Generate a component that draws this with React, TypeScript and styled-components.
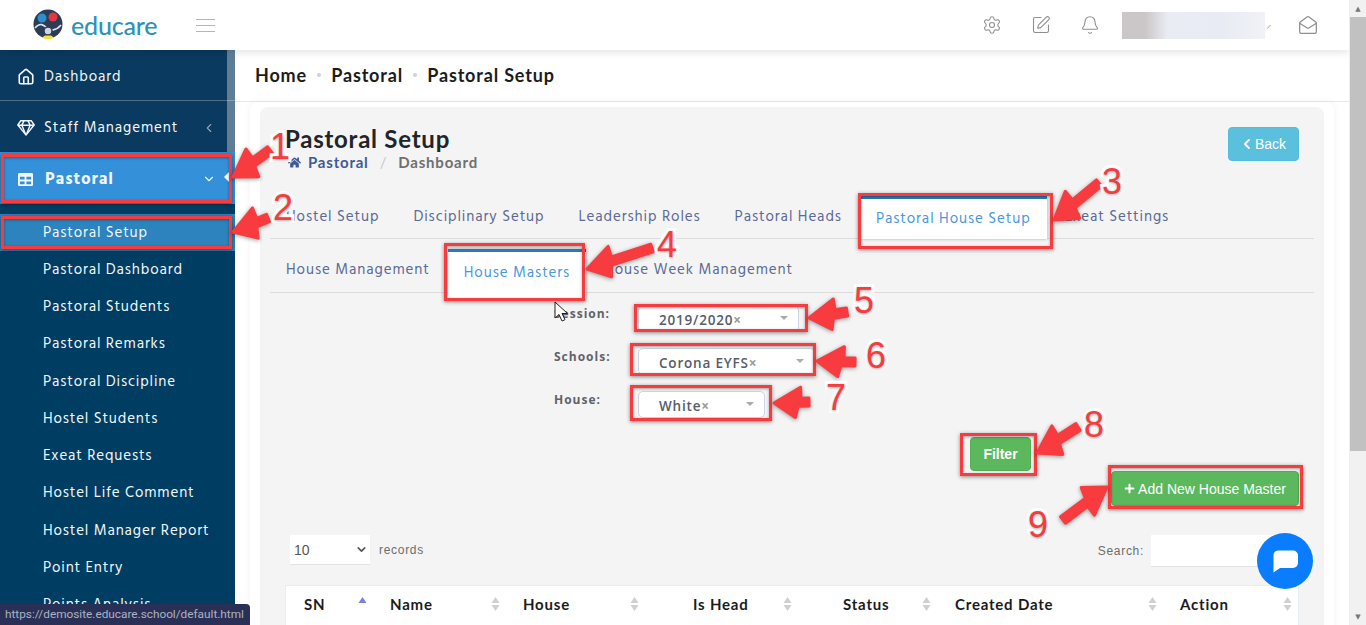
import React from 'react';
import styled, { createGlobalStyle } from 'styled-components';
import { Bell, ChevronDown, ChevronLeft, Home, MailOpen, Settings, SquarePen } from 'lucide-react';
import { FaChevronLeft, FaHome, FaPlus, FaRegGem, FaTable } from 'react-icons/fa';

const UI_FONT = `"Hind", "Noto Sans", "Liberation Sans", sans-serif`;
const TITLE_FONT = `"Lato", "Noto Sans", sans-serif`;
const RED = '#f73b3f';

const SUB_ITEMS = [
  'Pastoral Setup', 'Pastoral Dashboard', 'Pastoral Students', 'Pastoral Remarks', 'Pastoral Discipline',
  'Hostel Students', 'Exeat Requests', 'Hostel Life Comment', 'Hostel Manager Report', 'Point Entry', 'Points Analysis',
];

const MAIN_TABS = ['Hostel Setup', 'Disciplinary Setup', 'Leadership Roles', 'Pastoral Heads', 'Pastoral House Setup', 'Exeat Settings'];
const SUB_TABS = ['House Management', 'House Masters', 'House Week Management'];

const COLUMNS = [
  { label: 'SN', width: 86, sortPad: 5, active: true },
  { label: 'Name', width: 133, sortPad: 5 },
  { label: 'House', width: 170, sortPad: 36 },
  { label: 'Is Head', width: 150, sortPad: 33 },
  { label: 'Status', width: 112, sortPad: 6 },
  { label: 'Created Date', width: 225, sortPad: 5 },
  { label: 'Action', width: 135, sortPad: 5 },
];

const BOXES = [
  { x: 1, y: 154, w: 231, h: 49 },
  { x: 1, y: 216, w: 231, h: 33 },
  { x: 858, y: 193, w: 195, h: 56 },
  { x: 444, y: 243, w: 141, h: 58 },
  { x: 634, y: 304, w: 174, h: 28 },
  { x: 630, y: 343, w: 186, h: 33 },
  { x: 630, y: 385, w: 142, h: 36 },
  { x: 960, y: 433, w: 77, h: 43 },
  { x: 1108, y: 465, w: 195, h: 44 },
];

const ARROWS = [
  { from: [270, 150], to: [233, 177] },
  { from: [268, 218], to: [233, 232] },
  { from: [1099, 183], to: [1054, 220] },
  { from: [652, 248], to: [587, 269] },
  { from: [847, 312], to: [809, 318] },
  { from: [855, 362], to: [817, 361] },
  { from: [809, 402], to: [774, 403] },
  { from: [1078, 427], to: [1037, 453] },
  { from: [1063, 520], to: [1107, 487] },
];

const NUMBERS = [
  { n: 1, x: 280, y: 147 },
  { n: 2, x: 283, y: 208 },
  { n: 3, x: 1112, y: 182 },
  { n: 4, x: 667, y: 245 },
  { n: 5, x: 864, y: 301 },
  { n: 6, x: 876, y: 356 },
  { n: 7, x: 836, y: 398 },
  { n: 8, x: 1094, y: 425 },
  { n: 9, x: 1038, y: 525 },
];

const arrowPoints = (from: number[], to: number[]) => {
  const dx = to[0] - from[0];
  const dy = to[1] - from[1];
  const len = Math.hypot(dx, dy);
  const ux = dx / len;
  const uy = dy / len;
  const nx = -uy;
  const ny = ux;
  const headLen = 24;
  const baseX = to[0] - ux * headLen;
  const baseY = to[1] - uy * headLen;
  const pt = (x: number, y: number) => `${x.toFixed(1)},${y.toFixed(1)}`;
  return [
    pt(from[0] + nx * 4, from[1] + ny * 4),
    pt(baseX + nx * 4 - ux * 3, baseY + ny * 4 - uy * 3),
    pt(baseX + nx * 15 - ux * 3, baseY + ny * 15 - uy * 3),
    pt(to[0], to[1]),
    pt(baseX - nx * 15 + ux * 3, baseY - ny * 15 + uy * 3),
    pt(baseX - nx * 4, baseY - ny * 4),
    pt(from[0] - nx * 4, from[1] - ny * 4),
  ].join(' ');
};

const SortIcon = ({ active }: { active?: boolean }) => (
  <SortSvg viewBox="0 0 10 18" $active={active}>
    <polygon className="up" points="5,1 9.5,8 0.5,8" />
    {!active && <polygon className="down" points="0.5,10 9.5,10 5,17" />}
  </SortSvg>
);

const App = () => (
  <>
    <GlobalStyle />
    <Page>
      <Content>
        <TopBar>
          <LogoArea>
            <svg width="32" height="32" viewBox="0 0 32 32">
              <circle cx="16" cy="15" r="14.5" fill="#2d3c55" />
              <circle cx="10" cy="9" r="4.5" fill="#2c8fd0" />
              <circle cx="21" cy="8" r="4.5" fill="#e2383f" />
              <path d="M3 19c5-6 9-3 12 0s9 3 14-3" stroke="#dfe6ee" strokeWidth="1.6" fill="none" />
              <circle cx="16" cy="22" r="4" fill="#cfd6de" stroke="#2d3c55" strokeWidth="1.5" />
              <path d="M10 28.5c4 2 9 2 12 0l-3-2h-6z" fill="#f3e23c" />
            </svg>
            <LogoText>educare</LogoText>
          </LogoArea>
          <Burger>
            <span />
            <span />
            <span />
          </Burger>
          <TopIcons>
            <Settings size={20} strokeWidth={1.3} />
            <SquarePen size={20} strokeWidth={1.3} />
            <Bell size={20} strokeWidth={1.3} />
            <UserBlur />
            <UserCaret />
            <MailOpen size={20} strokeWidth={1.5} />
          </TopIcons>
        </TopBar>

        <Body>
          <Sidebar>
            <SideThumb />
            <SideItem $divider>
              <Home size={18} strokeWidth={2.2} />
              <span>Dashboard</span>
            </SideItem>
            <SideItem>
              <FaRegGem size={18} />
              <span>Staff Management</span>
              <ChevronLeft size={14} color="#8ba3b8" />
            </SideItem>
            <SideActive>
              <FaTable size={15} />
              <span>Pastoral</span>
              <ChevronDown size={14} />
            </SideActive>
            <SubMenu>
              {SUB_ITEMS.map((item, i) => (
                <SubItem key={item} $active={i === 0}>{item}</SubItem>
              ))}
            </SubMenu>
          </Sidebar>

          <Main>
            <Crumbs>
              <span>Home</span>
              <Dot />
              <span>Pastoral</span>
              <Dot />
              <span>Pastoral Setup</span>
            </Crumbs>

            <OuterCard>
              <Card>
                <TitleRow>
                  <div>
                    <PageTitle>Pastoral Setup</PageTitle>
                    <Path>
                      <FaHome size={13} color="#3f5a96" />
                      <PathLink>Pastoral</PathLink>
                      <PathSep>/</PathSep>
                      <PathCurrent>Dashboard</PathCurrent>
                    </Path>
                  </div>
                  <BackButton>
                    <FaChevronLeft size={12} />
                    Back
                  </BackButton>
                </TitleRow>

                <TabRow>
                  {MAIN_TABS.map((tab) => (
                    <Tab key={tab} $active={tab === 'Pastoral House Setup'}>{tab}</Tab>
                  ))}
                </TabRow>
                <SubTabRow>
                  {SUB_TABS.map((tab) => (
                    <SubTab key={tab} $active={tab === 'House Masters'}>{tab}</SubTab>
                  ))}
                </SubTabRow>

                <FilterForm>
                  <FormRow>
                    <FormLabel>Session:</FormLabel>
                    <SelectBox $width={161}>
                      <span>2019/2020</span><Clear>×</Clear>
                      <Caret />
                    </SelectBox>
                  </FormRow>
                  <FormRow>
                    <FormLabel>Schools:</FormLabel>
                    <SelectBox $width={177}>
                      <span>Corona EYFS</span><Clear>×</Clear>
                      <Caret />
                    </SelectBox>
                  </FormRow>
                  <FormRow>
                    <FormLabel>House:</FormLabel>
                    <SelectBox $width={127}>
                      <span>White</span><Clear>×</Clear>
                      <Caret />
                    </SelectBox>
                  </FormRow>
                </FilterForm>

                <FilterRow>
                  <FilterButton>Filter</FilterButton>
                </FilterRow>
                <AddRow>
                  <AddButton>
                    <FaPlus size={11} />
                    Add New House Master
                  </AddButton>
                </AddRow>

                <ToolRow>
                  <Records>
                    <RecordsSelect>
                      10
                      <ChevronDown size={13} strokeWidth={3} color="#555" />
                    </RecordsSelect>
                    <span>records</span>
                  </Records>
                  <SearchWrap>
                    <span>Search:</span>
                    <SearchInput />
                  </SearchWrap>
                </ToolRow>

                <TableHead>
                  {COLUMNS.map((col) => (
                    <HeadCell key={col.label} $width={col.width} $sortPad={col.sortPad}>
                      <span>{col.label}</span>
                      <SortIcon active={col.active} />
                    </HeadCell>
                  ))}
                </TableHead>
              </Card>
            </OuterCard>
          </Main>
        </Body>
      </Content>

      <Scrollbar>
        <ScrollButton>▲</ScrollButton>
        <ScrollThumb />
        <ScrollButton>▼</ScrollButton>
      </Scrollbar>

      <StatusTip>https://demosite.educare.school/default.html</StatusTip>

      <ChatBubble>
        <svg width="27" height="27" viewBox="0 0 27 27">
          <path d="M6 2.500h15a5 5 0 0 1 5 5v7.500a5 5 0 0 1-5 5H8l-6.500 4.500V7.500a5 5 0 0 1 4.500-5z" fill="#fff" />
        </svg>
      </ChatBubble>

      <Cursor width="16" height="22" viewBox="0 0 16 22">
        <path d="M1 1v16l4-3.500 3 6.500 3-1.300-3-6.200h5.500z" fill="#fff" stroke="#222" strokeWidth="1" />
      </Cursor>

      {BOXES.map((b) => (
        <RedBox key={`${b.x}-${b.y}`} $x={b.x} $y={b.y} $w={b.w} $h={b.h} />
      ))}
      <ArrowLayer width="1366" height="625" viewBox="0 0 1366 625">
        {ARROWS.map((a) => (
          <polygon key={a.to.join()} points={arrowPoints(a.from, a.to)} fill={RED} stroke={RED} strokeWidth="3" strokeLinejoin="round" />
        ))}
      </ArrowLayer>
      {NUMBERS.map((item) => (
        <StepNumber key={item.n} $x={item.x} $y={item.y}>{item.n}</StepNumber>
      ))}
    </Page>
  </>
);

const GlobalStyle = createGlobalStyle`
  html, body {
    margin: 0;
    padding: 0;
    overflow: hidden;
  }

  * {
    box-sizing: border-box;
  }
`;

const Page = styled.div`
  background: #fff;
  display: flex;
  font-family: ${UI_FONT};
  height: 625px;
  overflow: hidden;
  position: relative;
  width: 1366px;
`;

const Content = styled.div`
  display: flex;
  flex: 1;
  flex-direction: column;
  min-width: 0;
`;

const TopBar = styled.header`
  align-items: center;
  background: #fff;
  box-shadow: 0 2px 8px rgba(0, 0, 0, 0.12);
  display: flex;
  flex: 0 0 50px;
  padding: 0 31px 0 32px;
  position: relative;
  z-index: 2;
`;

const LogoArea = styled.div`
  align-items: center;
  display: flex;
  gap: 7px;
  width: 164px;
`;

const LogoText = styled.span`
  color: #2c93b8;
  font-family: ${TITLE_FONT};
  font-size: 25px;
  font-weight: 500;
  letter-spacing: -0.2px;
`;

const Burger = styled.div`
  display: flex;
  flex-direction: column;
  gap: 5px;
  width: 19px;

  span {
    background: #b5b5b5;
    display: block;
    height: 1px;
  }
`;

const TopIcons = styled.div`
  align-items: center;
  color: #8f8f8f;
  display: flex;
  gap: 29px;
  margin-left: auto;
`;

const UserBlur = styled.div`
  background: linear-gradient(90deg, #cbc6c8 0%, #cbc6c8 16%, #e9ecf3 32%, #e8ebf3 70%, #f1f2f7 100%);
  height: 27px;
  margin-left: -6.5px;
  width: 143px;
`;

const UserCaret = styled.div`
  border-bottom: 1px solid #bbb;
  height: 5px;
  margin-left: -29px;
  margin-right: -1px;
  transform: rotate(-45deg);
  width: 5px;
`;

const Body = styled.div`
  display: flex;
  flex: 1;
  min-height: 0;
`;

const Sidebar = styled.nav`
  background: #003d63;
  color: #f2f6f9;
  flex: 0 0 235px;
  overflow: hidden;
  position: relative;
`;

const SideThumb = styled.div`
  background: rgba(255, 255, 255, 0.35);
  height: 102px;
  position: absolute;
  right: 0;
  top: 0;
  width: 8px;
`;

const SideItem = styled.div<{ $divider?: boolean }>`
  align-items: center;
  background: #0a3a5f;
  border-bottom: 1px solid ${(p) => (p.$divider ? '#4d6d87' : 'transparent')};
  display: flex;
  font-size: 15px;
  gap: 9px;
  height: 51px;
  letter-spacing: 0.9px;
  padding: 3px 19px 0 17px;

  span {
    flex: 1;
  }
`;

const SideActive = styled.div`
  align-items: center;
  background: #3390d9;
  display: flex;
  font-size: 17px;
  font-weight: 700;
  gap: 12px;
  height: 52px;
  letter-spacing: 0.9px;
  padding: 2px 19px 0 18px;
  position: relative;

  span {
    flex: 1;
  }

  &::after {
    border-bottom: 6px solid transparent;
    border-right: 6px solid #fff;
    border-top: 6px solid transparent;
    content: '';
    position: absolute;
    right: 5px;
    top: 19px;
  }
`;

const SubMenu = styled.div`
  padding-top: 10px;
`;

const SubItem = styled.div<{ $active?: boolean }>`
  align-items: center;
  background: ${(p) => (p.$active ? '#2c83bd' : 'transparent')};
  display: flex;
  font-size: 15px;
  height: 37.25px;
  letter-spacing: 0.85px;
  padding-left: 43px;
`;

const Main = styled.main`
  display: flex;
  flex: 1;
  flex-direction: column;
  min-width: 0;
`;

const Crumbs = styled.div`
  align-items: center;
  border-bottom: 1px solid #e8e8e8;
  color: #1c1c1c;
  display: flex;
  flex: 0 0 52px;
  font-family: ${TITLE_FONT};
  font-size: 18px;
  font-weight: 700;
  gap: 10.2px;
  letter-spacing: 0.82px;
  padding: 0 0 2px 20px;
`;

const Dot = styled.i`
  background: #cfd4d8;
  border-radius: 50%;
  height: 4px;
  width: 4px;
`;

const OuterCard = styled.div`
  background: #fff;
  border-radius: 8px;
  box-shadow: 0 0 8px rgba(0, 0, 0, 0.05);
  flex: 1;
  margin: 0 15px;
  padding: 5px 10px 0;
`;

const Card = styled.section`
  background: #f4f4f4;
  border-radius: 8px 8px 0 0;
  height: 100%;
  padding: 19px 25px 0;
`;

const TitleRow = styled.div`
  align-items: flex-start;
  display: flex;
  height: 72px;
  justify-content: space-between;
`;

const PageTitle = styled.h1`
  color: #212529;
  font-family: ${TITLE_FONT};
  font-size: 24px;
  font-weight: 700;
  letter-spacing: 0.75px;
  line-height: 25px;
  margin: 0;
`;

const Path = styled.div`
  align-items: center;
  display: flex;
  font-family: ${TITLE_FONT};
  font-size: 15px;
  font-weight: 700;
  gap: 7px;
  letter-spacing: 0.8px;
  margin-top: 2px;
  padding-left: 3px;
`;

const PathLink = styled.span`
  color: #3f5a96;
`;

const PathSep = styled.span`
  color: #c9c9c9;
  font-weight: 400;
  margin: 0 4px;
`;

const PathCurrent = styled.span`
  color: #6f6f6f;
`;

const BackButton = styled.button`
  align-items: center;
  background: #5bc0de;
  border: 1px solid #53bcdc;
  border-radius: 4px;
  color: #fff;
  display: flex;
  font-family: "Liberation Sans", sans-serif;
  font-size: 14px;
  gap: 2px;
  height: 34px;
  justify-content: center;
  margin-top: 1px;
  padding: 0;
  width: 71px;
`;

const TabRow = styled.div`
  align-items: flex-end;
  border-bottom: 1px solid #dcdcdc;
  display: flex;
  height: 41px;
  margin: 0 -15px;
`;

const Tab = styled.div<{ $active?: boolean }>`
  align-items: center;
  background: ${(p) => (p.$active ? '#fff' : 'transparent')};
  border-top: ${(p) => (p.$active ? '3px solid #2a7ab8' : '0')};
  box-shadow: ${(p) => (p.$active ? '0 0 3px rgba(0, 0, 0, 0.3)' : 'none')};
  color: ${(p) => (p.$active ? '#4a97de' : '#5b6a97')};
  display: flex;
  font-size: 15px;
  height: 43px;
  letter-spacing: 0.9px;
  margin-bottom: -1px;
  margin-right: 2px;
  padding: ${(p) => (p.$active ? '0 16px' : '0 16px 1px')};
`;

const SubTabRow = styled(TabRow)`
  height: 54px;
`;

const SubTab = styled(Tab)`
  height: ${(p) => (p.$active ? '49px' : '44px')};
  margin-bottom: ${(p) => (p.$active ? '-6px' : '0')};
  padding: ${(p) => (p.$active ? '0 16px 4px' : '0 16px')};
`;

const FilterForm = styled.div`
  display: flex;
  flex-direction: column;
  gap: 16px;
  margin-top: 12px;
  padding-left: 269px;
`;

const FormRow = styled.div`
  align-items: flex-start;
  display: flex;
  height: 27px;
`;

const FormLabel = styled.label`
  color: #5f6368;
  font-family: "Open Sans", sans-serif;
  font-size: 12px;
  font-weight: 700;
  letter-spacing: 1px;
  line-height: 18px;
  width: 84px;
`;

const SelectBox = styled.div<{ $width: number }>`
  align-items: center;
  background: #fff;
  border: 1px solid #cdd5e2;
  border-radius: 5px;
  color: #555c6b;
  display: flex;
  font-family: "Open Sans", sans-serif;
  font-size: 13.5px;
  font-weight: 600;
  height: 27px;
  letter-spacing: 0.8px;
  padding: 3px 0 0 20px;
  position: relative;
  width: ${(p) => p.$width}px;
`;

const Clear = styled.span`
  color: #999;
  font-weight: 700;
  letter-spacing: 0;
`;

const Caret = styled.i`
  border-left: 4px solid transparent;
  border-right: 4px solid transparent;
  border-top: 4px solid #aaa;
  position: absolute;
  right: 10px;
  top: 10px;
`;

const FilterRow = styled.div`
  display: flex;
  justify-content: flex-end;
  margin-top: 19px;
  padding-right: 268px;
`;

const FilterButton = styled.button`
  background: #5cb85c;
  border: 1px solid #53ad53;
  border-radius: 4px;
  color: #fff;
  font-family: "Liberation Sans", sans-serif;
  font-size: 14px;
  font-weight: 700;
  height: 34px;
  padding: 0;
  width: 61px;
`;

const AddRow = styled.div`
  display: flex;
  justify-content: flex-end;
`;

const AddButton = styled.button`
  align-items: center;
  background: #5cb85c;
  border: 1px solid #53ad53;
  border-radius: 4px;
  color: #fff;
  display: flex;
  font-family: "Liberation Sans", sans-serif;
  font-size: 14px;
  gap: 3px;
  height: 35px;
  justify-content: center;
  padding: 0;
  width: 188px;
`;

const ToolRow = styled.div`
  align-items: flex-start;
  display: flex;
  justify-content: space-between;
  margin-top: 29px;
`;

const Records = styled.div`
  align-items: center;
  color: #6c6c6c;
  display: flex;
  font-family: "Liberation Sans", sans-serif;
  font-size: 12px;
  gap: 9px;
  height: 30px;
  letter-spacing: 0.7px;
  padding-left: 5px;
`;

const RecordsSelect = styled.div`
  align-items: center;
  background: #fff;
  border-bottom: 1px solid #e2e2e2;
  color: #555;
  display: flex;
  font-size: 14px;
  height: 30px;
  justify-content: space-between;
  letter-spacing: 0;
  padding: 0 2px 0 4px;
  width: 80px;
`;

const SearchWrap = styled.div`
  align-items: center;
  color: #6c6c6c;
  display: flex;
  font-family: "Liberation Sans", sans-serif;
  font-size: 12px;
  gap: 7px;
  letter-spacing: 0.7px;
`;

const SearchInput = styled.div`
  background: #fff;
  border-bottom: 1px solid #e2e2e2;
  height: 32px;
  width: 148px;
`;

const TableHead = styled.div`
  background: #fff;
  border: 1px solid #e8edf3;
  display: flex;
  height: 60px;
  margin-top: 18px;
  padding-top: 8px;
`;

const HeadCell = styled.div<{ $width: number; $sortPad: number }>`
  align-items: center;
  color: #1b1b1b;
  display: flex;
  font-family: ${TITLE_FONT};
  font-size: 15px;
  font-weight: 700;
  height: 20px;
  justify-content: space-between;
  letter-spacing: 0.8px;
  padding: 0 ${(p) => p.$sortPad}px 0 18px;
  width: ${(p) => p.$width}px;
`;

const SortSvg = styled.svg<{ $active?: boolean }>`
  height: 16px;
  width: 9px;

  .up {
    fill: ${(p) => (p.$active ? '#7a80dc' : '#d0d0d0')};
  }

  .down {
    fill: #d0d0d0;
  }
`;

const Scrollbar = styled.div`
  background: #f1f1f1;
  border-left: 1px solid #eee;
  display: flex;
  flex: 0 0 17px;
  flex-direction: column;
  position: relative;
  z-index: 3;
`;

const ScrollButton = styled.div`
  align-items: center;
  color: #777;
  display: flex;
  flex: 0 0 17px;
  font-family: "DejaVu Sans", sans-serif;
  font-size: 7px;
  justify-content: center;
`;

const ScrollThumb = styled.div`
  background: #c1c1c1;
  flex: 0 0 434px;
  margin-bottom: auto;
`;

const StatusTip = styled.div`
  background: #2a3055;
  border-radius: 0 4px 0 0;
  bottom: 0;
  color: #a9b3c4;
  font-family: Roboto, sans-serif;
  font-size: 11.8px;
  height: 21px;
  left: 0;
  line-height: 21px;
  padding-left: 5px;
  position: absolute;
  white-space: nowrap;
  width: 250px;
  z-index: 6;
`;

const ChatBubble = styled.div`
  align-items: center;
  background: #0a7cff;
  border-radius: 50%;
  bottom: 36px;
  display: flex;
  height: 56px;
  justify-content: center;
  position: absolute;
  right: 53px;
  width: 56px;
  z-index: 5;
`;

const Cursor = styled.svg`
  left: 554px;
  position: absolute;
  top: 301px;
  z-index: 7;
`;

const RedBox = styled.div<{ $x: number; $y: number; $w: number; $h: number }>`
  border: 3px solid ${RED};
  box-shadow: 0 1px 4px rgba(0, 0, 0, 0.45), inset 0 1px 3px rgba(0, 0, 0, 0.35);
  height: ${(p) => p.$h}px;
  left: ${(p) => p.$x}px;
  position: absolute;
  top: ${(p) => p.$y}px;
  width: ${(p) => p.$w}px;
  z-index: 8;
`;

const ArrowLayer = styled.svg`
  filter: drop-shadow(0 1px 2px rgba(0, 0, 0, 0.4));
  left: 0;
  pointer-events: none;
  position: absolute;
  top: 0;
  z-index: 9;
`;

const StepNumber = styled.span<{ $x: number; $y: number }>`
  color: ${RED};
  font-family: "Liberation Sans", sans-serif;
  font-size: 36px;
  left: ${(p) => p.$x}px;
  line-height: 1;
  paint-order: stroke fill;
  position: absolute;
  text-shadow: 0 1px 3px rgba(0, 0, 0, 0.35);
  top: ${(p) => p.$y}px;
  transform: translate(-50%, -50%);
  -webkit-text-stroke: 6px #fff;
  z-index: 10;
`;

export default App;
